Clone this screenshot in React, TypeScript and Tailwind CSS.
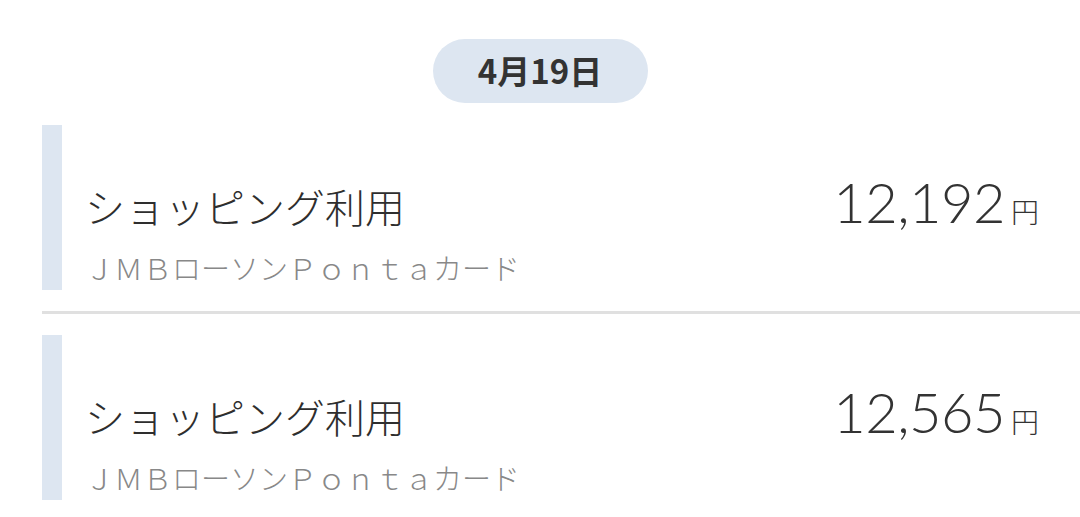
const jp = "font-['Noto_Sans_CJK_JP','Noto_Sans',sans-serif]"

type Item = {
    title: string
    card: string
    amount: string
}

const items: Item[] = [
    { title: "ショッピング利用", card: "ＪＭＢローソンＰｏｎｔａカード", amount: "12,192" },
    { title: "ショッピング利用", card: "ＪＭＢローソンＰｏｎｔａカード", amount: "12,565" },
]

const Row = ({ item }: { item: Item }) => {
    return (
        <div className="flex h-[165px]">
            <div className="w-[20px] shrink-0 bg-[#dde6f1]" />
            <div className="flex flex-1 flex-col pt-[49px] pl-[23px] pr-[41px]">
                <div className="flex items-baseline justify-between">
                    <span className={`${jp} text-[40px] font-light leading-[48px] text-[#2e2e2e]`}>{item.title}</span>
                    <span className="flex items-baseline">
                        <span className="font-['Lato',sans-serif] text-[56px] font-light leading-none tracking-[-0.5px] text-[#333333]">{item.amount}</span>
                        <span className={`${jp} ml-[6px] text-[28px] font-light text-[#333333]`}>円</span>
                    </span>
                </div>
                <span className={`${jp} mt-[15px] text-[29px] font-light leading-[40px] text-[#888888]`}>{item.card}</span>
            </div>
        </div>
    )
}

export default function App() {
    return (
        <div className="h-[517px] w-[1080px] overflow-hidden bg-white">
            <div className="flex justify-center pt-[39px]">
                <div className={`${jp} flex h-[64px] w-[215px] items-center justify-center rounded-full bg-[#dde6f1] text-[33px] font-bold text-[#333333]`}>
                    4月19日
                </div>
            </div>
            <div className="mt-[22px] ml-[42px]">
                <Row item={items[0]} />
                <div className="mt-[21px] h-[3px] bg-[#e0e0e0]" />
                <div className="mt-[21px]">
                    <Row item={items[1]} />
                </div>
            </div>
        </div>
    )
}
